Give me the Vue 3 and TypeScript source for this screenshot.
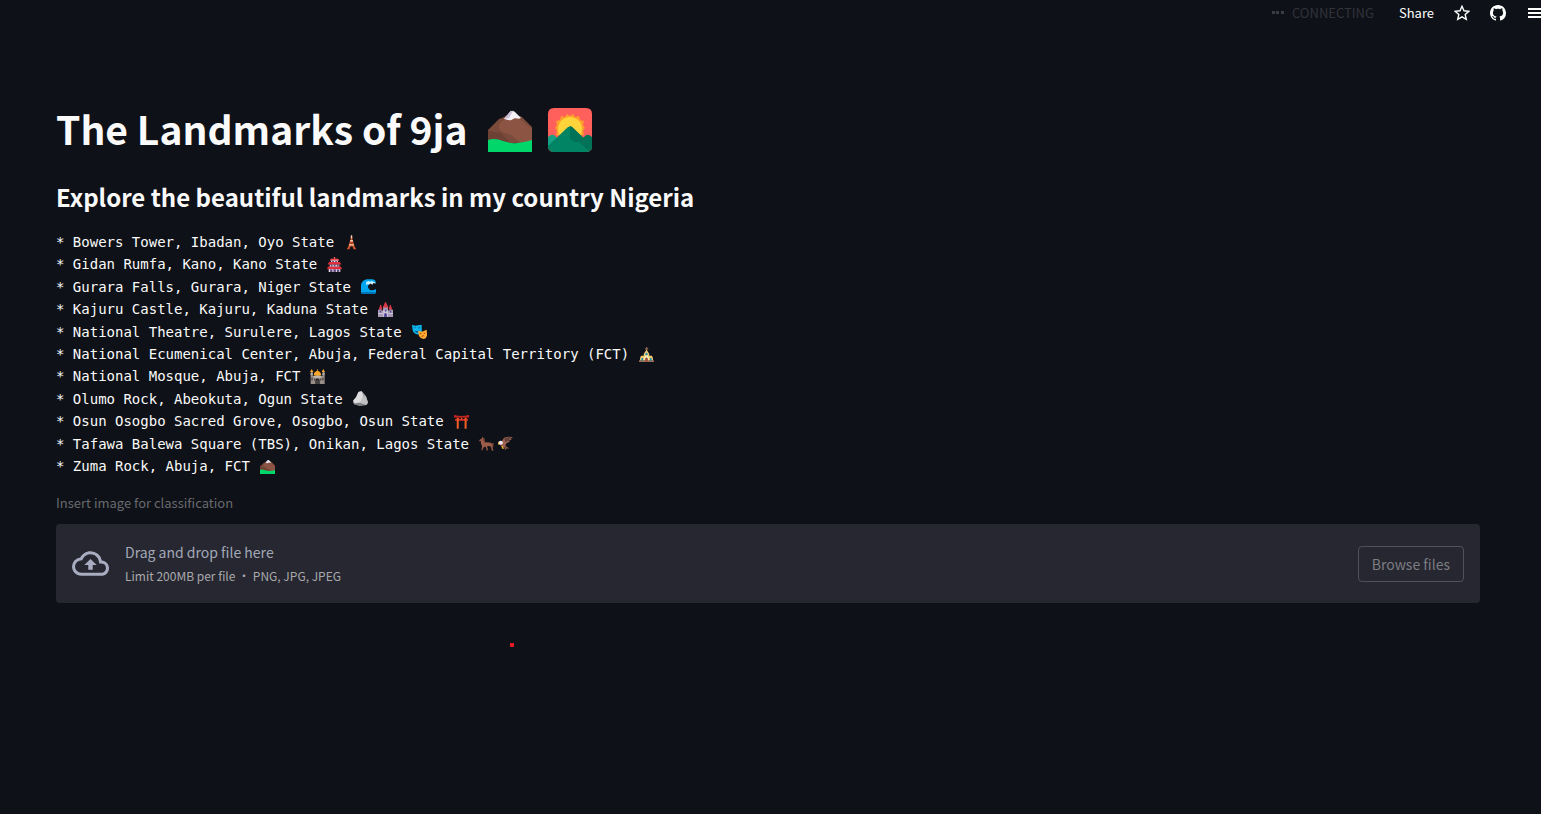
<script setup lang="ts">
import { ref } from 'vue'

interface Shape {
  d: string
  fill: string
}

interface Landmark {
  text: string
  icons: string[]
}

// Every drawing uses a 44 x 44 canvas.
const drawings: Record<string, Shape[]> = {
  mountain: [
    { fill: '#7a4a3a', d: 'M0 22 9 13q2-3 5-3l5-3 13 1 2 1 10 10v16H0z' },
    { fill: '#8c5543', d: 'M17 11h15l12 10v14L32 34 23 27c-5-2-11-2-12-8 0-4 3-6 6-8z' },
    { fill: '#6d4234', d: 'M0 23v9c7-2 14 2 22 3l-9-10z' },
    { fill: '#f4f0f8', d: 'M16 11l5-6c2-3 4-3 7 0l5 5c-3 2-5-1-8 1-4 3-6 0-9 0z' },
    { fill: '#c9bfd6', d: 'M16 11l5-6c1-2 3-2 4-2l-4 7z' },
    { fill: '#00d66a', d: 'M0 32c5-2 10-1 15 1 8 3 15 3 29-1v12H0z' },
  ],
  sunrise: [
    { fill: '#ff605c', d: 'M6 0h32q6 0 6 6v32q0 6-6 6H6q-6 0-6-6V6q0-6 6-6z' },
    { fill: '#ff9f2e', d: 'M22 8l3-2 2 3 4-1 1 4 4 1-1 4 2 3-2 3 1 4-4 1-2 3H14l-2-3-4-1 1-4-2-3 2-3-1-4 4-1 1-4 4 1 2-3z' },
    { fill: '#ffd43b', d: 'M10 21a12 12 0 0 1 24 0c0 7-5 12-12 12s-12-5-12-12z' },
    { fill: '#17a083', d: 'M0 29l3-2q2-1 4 1l9 9L0 40z' },
    { fill: '#007257', d: 'M44 29l-3-2q-2-1-4 1l-9 9 16 3z' },
    { fill: '#008463', d: 'M0 38l20-19q2-1 4 0l20 19q0 6-6 6H6q-6 0-6-6z' },
    { fill: '#007257', d: 'M22 18q1 0 2 1l20 19q0 4-3 5L31 34h-4l-5-3z' },
  ],
  tower: [
    { fill: '#cf5527', d: 'M21 3h3l1 11 3 8 3 11 5 9h-8l-3-8h-6l-3 8H8l5-9 3-11 3-8z' },
    { fill: '#f6d0bd', d: 'M20 1h4v9h-4zM18 15h8v4h-8zM15 27h14v4H15z' },
    { fill: '#8e3520', d: 'M18 23h8v3h-8zM22 31l3 3h-6z' },
  ],
  pagoda: [
    { fill: '#f05050', d: 'M20 0h4v5h9l3 6H8l3-6h9z' },
    { fill: '#e6e2f2', d: 'M12 10h20v8H12zM8 22h28v9H8zM5 34h34v10H5z' },
    { fill: '#df2f3d', d: 'M6 15h32l4 7H2zM3 28h38l3 8H0z' },
    { fill: '#624a79', d: 'M15 12h5v3h-5zM24 12h5v3h-5zM11 23h5v5h-5zM20 22h5v6h-5zM29 23h5v5h-5zM9 37h7v7H9zM19 36h7v8h-7zM29 37h7v7h-7z' },
  ],
  wave: [
    { fill: '#00a6ed', d: 'M0 20C0 8 9 1 21 1h13q10 1 10 12-4-4-8-2l-8 1c-9 4-10 16-1 20 6 3 12-1 17-3v9q0 6-6 6H5q-5 0-5-5z' },
    { fill: '#caf0ff', d: 'M15 9l7-3 5 2 5-3 3 3 5 1 3 5-6-2-4 5-5-4-5 4-3-2-4 4z' },
    { fill: '#0074ba', d: 'M1 38h42q-1 6-6 6H7q-5 0-6-6z' },
  ],
  castle: [
    { fill: '#a99bb5', d: 'M0 23h5v-5h5v7h5V15h14v10h5v-7h5v5h5v21H0z' },
    { fill: '#d83845', d: 'M21 0h2l8 16H14zM7 8h2l4 14H2zM35 8h2l5 14H31z' },
    { fill: '#cec4d7', d: 'M15 23h14v21H15zM0 32h14v3H0zM30 32h14v3H30z' },
    { fill: '#51469a', d: 'M18 44v-8q4-7 8 0v8zM20 22h5v6h-5zM5 26h4v5H5zM35 26h4v5h-4z' },
  ],
  masks: [
    { fill: '#0bb5ed', d: 'M0 2l9 3L28 2l1 17q-1 10-12 12Q4 27 2 18z' },
    { fill: '#075b88', d: 'M5 11q4-4 7 1-4 1-7-1zM17 12q4-5 8-1-4 3-8 1zM7 19q8 4 16-1-2 8-8 8-6-1-8-7z' },
    { fill: '#ffad32', d: 'M18 20l11 3 14-6 1 13q1 10-9 14-11-1-15-10z' },
    { fill: '#a64b0b', d: 'M22 28q4-3 7 1l-6 1zM34 28q3-4 6-1l-5 2zM26 38q6-9 11-2-6-1-11 2z' },
  ],
  church: [
    { fill: '#9c6c55', d: 'M21 0h3v4h3v3h-3v6h-3V7h-3V4h3zM0 39h44v5H0z' },
    { fill: '#f5cb72', d: 'M22 8l8 12v6h8l3 7v6H3v-6l3-7h8v-6z' },
    { fill: '#fff0b7', d: 'M22 18l7 14v7H15v-7z' },
    { fill: '#168eb0', d: 'M19 19q3-4 6 0v5h-6zM7 32h5v8H7zM32 32h5v8h-5z' },
    { fill: '#9b4b39', d: 'M18 42v-8q4-6 8 0v8z' },
  ],
  mosque: [
    { fill: '#9a8f87', d: 'M2 8h6v12h7l4-4h7l4 4h7V8h6v36H28V32q-6-8-12 0v12H2z' },
    { fill: '#f9a529', d: 'M5 0l5 9H0zM39 0l5 9H34zM21 1h2v4q12 6 9 14H12Q9 10 21 5z' },
    { fill: '#d0c8be', d: 'M1 13h8v3H1zM35 13h8v3h-8zM11 21h22v4H11z' },
    { fill: '#4c4547', d: 'M4 26h4v8H4zM36 26h4v8h-4zM12 28h4v6h-4zM29 28h4v6h-4zM18 44V34q4-6 8 0v10z' },
  ],
  rock: [
    { fill: '#a3a3a6', d: 'M16 3q6-4 11-1l11 13 6 17q0 6-5 9l-20 2-15-4q-6-4-3-12L9 18z' },
    { fill: '#dddde0', d: 'M16 3l10-2 4 15-8 17-17 3-4-8 8-10z' },
    { fill: '#c0c0c3', d: 'M30 16l8 0 5 17-4 8-15 0-3-8z' },
    { fill: '#808084', d: 'M5 37l17-2 17 6-20 2-15-4z' },
  ],
  shrine: [
    { fill: '#d62b27', d: 'M0 3q22 5 44 0v7H0zM3 15h38v5H3z' },
    { fill: '#ee5b25', d: 'M8 10h6v33H8zM31 10h6v33h-6zM20 10h4v6h-4z' },
    { fill: '#8e1715', d: 'M0 8h44v3H0z' },
  ],
  horse: [
    { fill: '#9b5b49', d: 'M1 12L8 7l2-5 3 4 3 2 2 10 14 1 9 4-1 12 2 7-4 1-3-10-2-3-8-1-1 4 3 7-4 1-4-10-6 3-2 8h-4l2-12-3-7-1-9-4 2z' },
    { fill: '#61392f', d: 'M12 4l4 4 3 10-3 1-4-9zM36 21q6-3 8 2l-2 10-3-9z' },
    { fill: '#61392f', d: 'M7 38h5v3H7zM21 40h5v3h-5zM37 41h5v3h-5z' },
  ],
  eagle: [
    { fill: '#9f624f', d: 'M10 17l8-12 10-3 16 1-7 5 4 1-9 5 3 2-11 6-2 7 12 8-8-1-5 5-3-9-9-2-5-7z' },
    { fill: '#65433b', d: 'M18 8l11-5 12 1-10 6 5 1-14 7zM20 28l10 7-6-1-2 4z' },
    { fill: '#f1ecf2', d: 'M2 17q5-6 11-1l2 5-6 5-5-1-4-2z' },
    { fill: '#f8b83b', d: 'M0 20l5-1-2 5-3 2zM10 29l5 1 3 9-4-3-2 3-1-6z' },
  ],
}

const landmarks: Landmark[] = [
  { text: '* Bowers Tower, Ibadan, Oyo State', icons: ['tower'] },
  { text: '* Gidan Rumfa, Kano, Kano State', icons: ['pagoda'] },
  { text: '* Gurara Falls, Gurara, Niger State', icons: ['wave'] },
  { text: '* Kajuru Castle, Kajuru, Kaduna State', icons: ['castle'] },
  { text: '* National Theatre, Surulere, Lagos State', icons: ['masks'] },
  { text: '* National Ecumenical Center, Abuja, Federal Capital Territory (FCT)', icons: ['church'] },
  { text: '* National Mosque, Abuja, FCT', icons: ['mosque'] },
  { text: '* Olumo Rock, Abeokuta, Ogun State', icons: ['rock'] },
  { text: '* Osun Osogbo Sacred Grove, Osogbo, Osun State', icons: ['shrine'] },
  { text: '* Tafawa Balewa Square (TBS), Onikan, Lagos State', icons: ['horse', 'eagle'] },
  { text: '* Zuma Rock, Abuja, FCT', icons: ['mountain'] },
]

const picker = ref<HTMLInputElement | null>(null)

function browse(): void {
  picker.value?.click()
}
</script>

<template>
  <div class="app">
    <header class="toolbar">
      <div class="status" role="status">
        <svg class="dots" viewBox="0 0 12 4" aria-hidden="true">
          <path d="M0 0h3v3H0zM4 0h3v3H4zM9 0h3v3H9z" />
        </svg>
        <span>Connecting</span>
      </div>
      <button class="tool share" type="button">Share</button>
      <button class="tool" type="button" aria-label="Star">
        <svg class="tool-icon" viewBox="0 0 16 16" aria-hidden="true">
          <path
            d="M8 1.3l2 4.5 4.9.5-3.7 3.3 1.1 4.8L8 11.9l-4.3 2.5 1.1-4.8L1.1 6.3 6 5.8z"
            fill="none"
            stroke="currentColor"
            stroke-width="1.4"
            stroke-linejoin="miter"
          />
        </svg>
      </button>
      <button class="tool" type="button" aria-label="View source">
        <svg class="tool-icon" viewBox="0 0 16 16" aria-hidden="true">
          <path
            fill="currentColor"
            d="M8 0C3.58 0 0 3.58 0 8c0 3.54 2.29 6.53 5.47 7.59.4.07.55-.17.55-.38 0-.19-.01-.82-.01-1.49-2.01.37-2.53-.49-2.69-.94-.09-.23-.48-.94-.82-1.13-.28-.15-.68-.52-.01-.53.63-.01 1.08.58 1.23.82.72 1.21 1.87.87 2.33.66.07-.52.28-.87.51-1.07-1.78-.2-3.64-.89-3.64-3.95 0-.87.31-1.59.82-2.15-.08-.2-.36-1.02.08-2.12 0 0 .67-.21 2.2.82.64-.18 1.32-.27 2-.27s1.36.09 2 .27c1.53-1.04 2.2-.82 2.2-.82.44 1.1.16 1.92.08 2.12.51.56.82 1.27.82 2.15 0 3.07-1.87 3.75-3.65 3.95.29.25.54.73.54 1.48 0 1.07-.01 1.93-.01 2.2 0 .21.15.46.55.38A8.01 8.01 0 0 0 16 8c0-4.42-3.58-8-8-8z"
          />
        </svg>
      </button>
      <button class="tool menu" type="button" aria-label="Main menu">
        <svg class="tool-icon" viewBox="0 0 16 16" aria-hidden="true">
          <path fill="currentColor" d="M0 3h16v2H0zM0 7h16v2H0zM0 11h16v2H0z" />
        </svg>
      </button>
    </header>

    <main class="content">
      <h1 class="title">
        <span class="title-text">The Landmarks of 9ja</span>
        <svg
          v-for="name in ['mountain', 'sunrise']"
          :key="name"
          class="title-emoji"
          viewBox="0 0 44 44"
          role="img"
          :aria-label="name"
        >
          <path v-for="(shape, i) in drawings[name]" :key="i" :d="shape.d" :fill="shape.fill" />
        </svg>
      </h1>
      <h2 class="subtitle">Explore the beautiful landmarks in my country Nigeria</h2>

      <ul class="landmarks">
        <li v-for="item in landmarks" :key="item.text" class="landmark">
          <span>{{ item.text }}</span>
          <span class="emojis">
            <svg
              v-for="name in item.icons"
              :key="name"
              class="emoji"
              viewBox="0 0 44 44"
              role="img"
              :aria-label="name"
            >
              <path v-for="(shape, i) in drawings[name]" :key="i" :d="shape.d" :fill="shape.fill" />
            </svg>
          </span>
        </li>
      </ul>

      <label class="upload-label" for="image-file">Insert image for classification</label>
      <section class="dropzone">
        <input id="image-file" ref="picker" class="file-input" type="file" accept=".png,.jpg,.jpeg" />
        <svg class="cloud" viewBox="0 0 24 24" aria-hidden="true">
          <path
            fill="currentColor"
            d="M19.35 10.04A7.49 7.49 0 0 0 12 4C9.11 4 6.6 5.64 5.35 8.04A5.994 5.994 0 0 0 0 14c0 3.31 2.69 6 6 6h13c2.76 0 5-2.24 5-5 0-2.64-2.05-4.78-4.65-4.96zM19 18H6c-2.21 0-4-1.79-4-4 0-2.05 1.53-3.76 3.56-3.97l1.07-.11.5-.95A5.469 5.469 0 0 1 12 6c2.62 0 4.88 1.86 5.39 4.43l.3 1.5 1.53.11A2.98 2.98 0 0 1 22 15c0 1.65-1.35 3-3 3zM8 13h2.55v3h2.9v-3H16l-4-4z"
          />
        </svg>
        <div class="hints">
          <span class="hint-main">Drag and drop file here</span>
          <span class="hint-limit">Limit 200MB per file • PNG, JPG, JPEG</span>
        </div>
        <button class="browse" type="button" @click="browse">Browse files</button>
      </section>
    </main>
    <span class="pointer-mark" aria-hidden="true"></span>
  </div>
</template>

<style>
body {
  margin: 0;
  background: #0e1117;
}
</style>

<style scoped>
.app {
  position: relative;
  min-height: 100vh;
  overflow: hidden;
  background: #0e1117;
  color: #fafafa;
  font-family: 'Noto Sans CJK SC', 'Open Sans', sans-serif;
}

.toolbar {
  display: flex;
  align-items: center;
  justify-content: flex-end;
  height: 26px;
  font-size: 13px;
  line-height: 20px;
}

.status {
  display: flex;
  align-items: center;
  gap: 8px;
  margin-right: 25px;
  color: #31333b;
  text-transform: uppercase;
}

.dots {
  width: 12px;
  height: 4px;
  fill: #3b3d45;
}

.tool {
  display: flex;
  align-items: center;
  margin: 0 20px 0 0;
  padding: 0;
  border: 0;
  background: none;
  color: #ffffff;
  font: inherit;
}

.tool-icon {
  width: 16px;
  height: 16px;
}

.menu {
  margin-left: 2px;
  margin-right: -3px;
}

.content {
  padding: 68px 61px 0 56px;
}

.title {
  display: flex;
  align-items: center;
  gap: 16px;
  margin: 0;
  font-size: 39px;
  font-weight: 700;
  line-height: 68px;
}

.title-text {
  margin-right: 4px;
}

.title-emoji {
  width: 44px;
  height: 44px;
  margin-top: 4px;
}

.subtitle {
  margin: 17px 0 0;
  font-size: 24px;
  font-weight: 600;
  line-height: 36px;
}

.landmarks {
  margin: 16px 0 0;
  padding: 0;
  list-style: none;
  font-family: 'DejaVu Sans Mono', monospace;
  font-size: 14px;
  line-height: 1.6;
}

.landmark {
  display: flex;
  align-items: center;
  gap: 10px;
}

.emojis {
  display: flex;
  gap: 4px;
}

.emoji {
  width: 15px;
  height: 15px;
}

.upload-label {
  display: block;
  width: fit-content;
  margin: 16px 0 0;
  color: #686a6e;
  font-size: 13px;
  line-height: 20px;
}

.dropzone {
  position: relative;
  display: flex;
  align-items: center;
  margin-top: 11px;
  padding: 16px;
  border-radius: 4px;
  background: #262730;
}

.file-input {
  position: absolute;
  width: 1px;
  height: 1px;
  opacity: 0;
}

.cloud {
  width: 37px;
  height: 37px;
  margin-right: 16px;
  color: #a9adc1;
}

.hints {
  display: flex;
  flex: 1;
  flex-direction: column;
}

.hint-main {
  color: #a3a8b8;
  font-size: 14px;
  line-height: 24px;
}

.hint-limit {
  color: #a9a9ad;
  font-size: 12px;
  line-height: 23px;
}

.browse {
  padding: 5px 13px;
  border: 1px solid #50515a;
  border-radius: 4px;
  background: transparent;
  color: #7c7d83;
  font-family: inherit;
  font-size: 14px;
  line-height: 24px;
}

.pointer-mark {
  position: absolute;
  top: 643px;
  left: 510px;
  width: 4px;
  height: 4px;
  border-radius: 1px;
  background: #ed1c24;
}
</style>
